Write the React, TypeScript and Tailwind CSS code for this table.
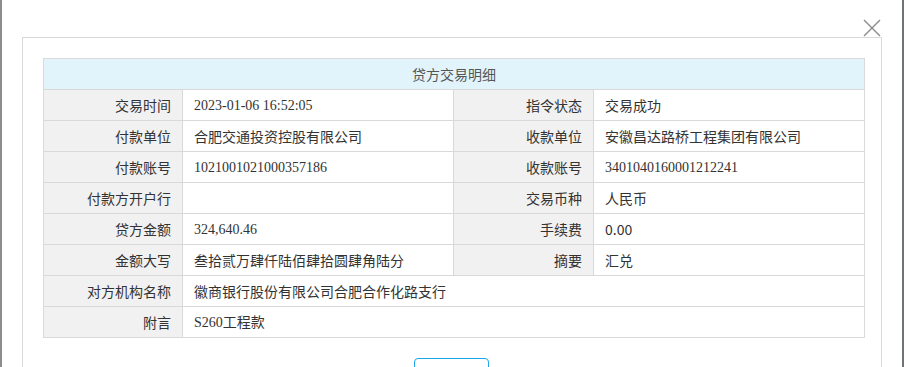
import React from 'react';

type Row = { l1: string; v1: string; l2?: string; v2?: string; serif1?: boolean; serif2?: boolean };

const rows: Row[] = [
  { l1: '交易时间', v1: '2023-01-06 16:52:05', serif1: true, l2: '指令状态', v2: '交易成功' },
  { l1: '付款单位', v1: '合肥交通投资控股有限公司', l2: '收款单位', v2: '安徽昌达路桥工程集团有限公司' },
  { l1: '付款账号', v1: '1021001021000357186', serif1: true, l2: '收款账号', v2: '3401040160001212241', serif2: true },
  { l1: '付款方开户行', v1: '', l2: '交易币种', v2: '人民币' },
  { l1: '贷方金额', v1: '324,640.46', serif1: true, l2: '手续费', v2: '0.00' },
  { l1: '金额大写', v1: '叁拾贰万肆仟陆佰肆拾圆肆角陆分', l2: '摘要', v2: '汇兑' },
  { l1: '对方机构名称', v1: '徽商银行股份有限公司合肥合作化路支行' },
  { l1: '附言', v1: 'S260工程款', serif1: true },
];

const sans = "font-['Noto_Sans_CJK_SC','Noto_Sans',sans-serif]";
const serif = "font-['Liberation_Serif','Noto_Sans_CJK_SC',serif]";

const labelCls = `h-[31px] border border-[#d9d9d9] bg-[#f1f1f1] py-0 pr-[11px] text-right text-[14px] text-[#333] ${sans}`;
const valueCls = 'h-[31px] border border-[#d9d9d9] bg-white py-0 pl-[11px] text-left text-[14px] text-[#333]';

const App: React.FC = () => {
  return (
    <div className="flex h-[367px] w-[904px] overflow-hidden bg-[#7a7f80]">
      <div className="w-[2px] shrink-0 bg-[#8c8c8c]" />
      <div className="flex w-[900px] shrink-0 flex-col bg-white px-[20px]">
        {/* close */}
        <div className="flex h-[39px] items-start justify-end pr-[1px] pt-[19px]">
          <svg width="18" height="18" viewBox="0 0 18 18" className="text-[#8a8a8a]">
            <path d="M1 1 L17 17 M17 1 L1 17" stroke="currentColor" strokeWidth="1.4" fill="none" />
          </svg>
        </div>

        <div className="flex-1 border border-b-0 border-[#d9d9d9] pl-[20px] pr-[16px] pt-[20px]">
          <table className="w-[821px] table-fixed border-collapse">
            <colgroup>
              <col className="w-[139px]" />
              <col className="w-[271px]" />
              <col className="w-[140px]" />
              <col className="w-[271px]" />
            </colgroup>
            <thead>
              <tr>
                <th
                  colSpan={4}
                  className={`h-[31px] border border-[#d9d9d9] bg-[#e2f4fb] py-0 text-center text-[14px] font-normal text-[#555] ${sans}`}
                >
                  贷方交易明细
                </th>
              </tr>
            </thead>
            <tbody>
              {rows.map((r) => (
                <tr key={r.l1}>
                  <td className={labelCls}>{r.l1}</td>
                  {r.l2 ? (
                    <>
                      <td className={`${valueCls} ${r.serif1 ? serif : sans}`}>{r.v1}</td>
                      <td className={labelCls}>{r.l2}</td>
                      <td className={`${valueCls} ${r.serif2 ? serif : sans}`}>{r.v2}</td>
                    </>
                  ) : (
                    <td colSpan={3} className={`${valueCls} ${r.serif1 ? serif : sans}`}>
                      {r.v1}
                    </td>
                  )}
                </tr>
              ))}
            </tbody>
          </table>

          <div className="mt-[20px] flex justify-center pr-[5px]">
            <button className="h-[30px] w-[75px] rounded-[4px] border border-[#1aa6e8] bg-white" />
          </div>
        </div>
      </div>
      <div className="w-[2px] shrink-0 bg-[#6f7373]" />
    </div>
  );
};

export default App;
